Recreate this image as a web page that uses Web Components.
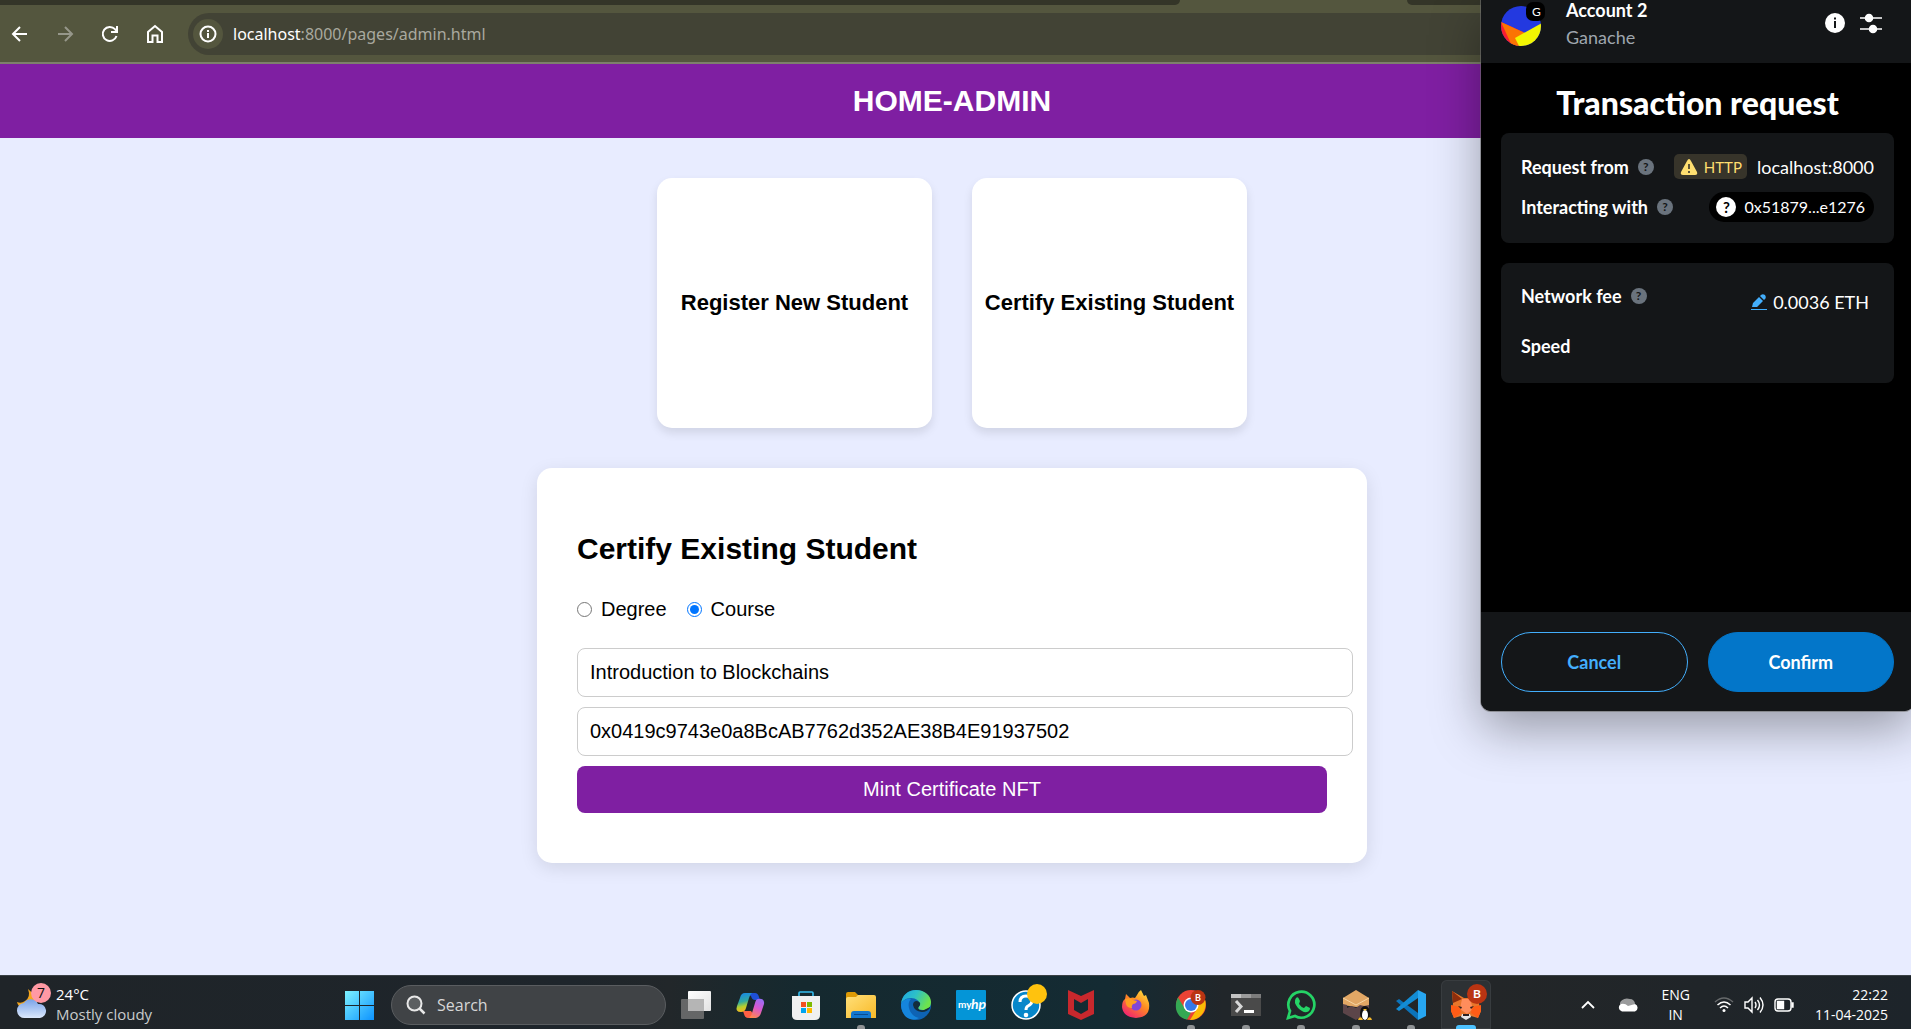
<!DOCTYPE html>
<html lang="en">
<head>
<meta charset="utf-8">
<title>Home-Admin</title>
<style>
html,body{margin:0;height:100%;overflow:hidden}
body{font-family:"Liberation Sans",Arial,sans-serif;background:#e8ecff}
</style>
</head>
<body>
<desktop-screen></desktop-screen>
<script>
function define(name, html){
  const t=document.createElement('template');
  t.innerHTML=html;
  customElements.define(name,class extends HTMLElement{
    constructor(){super();this.attachShadow({mode:'open'}).append(t.content.cloneNode(true));}
  });
}

define('browser-toolbar',`
<style>
:host{display:block;background:#54563e;border-bottom:2px solid #7e7f6c;font-family:"Noto Sans","Open Sans",sans-serif}
.tabs{display:flex;justify-content:space-between;height:5px}
.tabs span{background:#343528}
.a{width:1180px;border-radius:0 0 14px 0}.b{width:504px;border-radius:0 0 0 14px}
.bar{display:flex;align-items:center;padding:8px 8px 7px 8px;height:42px}
button{width:24px;height:24px;padding:0;border:0;background:none;margin-right:21px;flex:none}
button svg{display:block}
.omni{flex:1;display:flex;align-items:center;height:42px;border-radius:21px;background:#424335;padding-left:5px;gap:10px}
.info{width:30px;height:30px;border-radius:15px;background:#54563e;display:grid;place-items:center}
.url{font-size:16px;line-height:24px;color:#a9a99f}
.url b{font-weight:400;color:#fff}
</style>
<div class="tabs"><span class="a"></span><span class="b"></span></div>
<div class="bar">
<button aria-label="Back"><svg width="24" height="24" viewBox="0 0 24 24" fill="none" stroke="#fff" stroke-width="2"><path d="M19 12H5M12 5l-7 7 7 7"/></svg></button>
<button aria-label="Forward"><svg width="24" height="24" viewBox="0 0 24 24" fill="none" stroke="#96978a" stroke-width="2"><path d="M5 12h14M12 5l7 7-7 7"/></svg></button>
<button aria-label="Reload"><svg width="24" height="24" viewBox="0 0 24 24" fill="none" stroke="#fff" stroke-width="2"><path d="M18.5 14A7 7 0 1 1 17 7.200l2 2"/><path d="M19 4v6h-6"/></svg></button>
<button aria-label="Home"><svg width="24" height="24" viewBox="0 0 24 24" fill="none" stroke="#fff" stroke-width="2"><path d="M5 20V10l7-6 7 6v10h-4.500v-6.500h-5V20z"/></svg></button>
<div class="omni"><span class="info"><svg width="18" height="18" viewBox="0 0 18 18" fill="none" stroke="#fff" stroke-width="2"><circle cx="9" cy="9" r="7.500"/><path d="M9 8v5M9 5v2"/></svg></span><span class="url"><b>localhost</b>:8000/pages/admin.html</span></div>
</div>`);

define('option-card',`
<style>
:host{display:block}
button{display:flex;align-items:center;justify-content:center;width:275px;height:250px;padding:0;border:0;border-radius:15px;background:#fff;box-shadow:0 5px 10px rgba(0,0,0,.1);font:bold 22px/26px "Liberation Sans",Arial,sans-serif;color:#000;white-space:nowrap}
</style><button><slot></slot></button>`);

define('certify-form',`
<style>
:host{display:block;width:750px;padding:40px;background:#fff;border-radius:15px;box-shadow:0 5px 18px rgba(0,0,0,.1)}
h2{margin:24px 0 31px;font-size:30px;line-height:34px}
.kinds{display:flex;gap:20px;margin-bottom:27px}
label.k{display:flex;align-items:center;gap:9px;font-size:20px;line-height:24px}
input[type=radio]{width:15px;height:15px;margin:0}
input[type=text]{display:block;width:776px;box-sizing:border-box;height:49px;margin:0 0 10px;padding:0 12px;border:1px solid #ccc;border-radius:8px;font:20px "Liberation Sans",Arial,sans-serif;color:#000;background:#fff}
button{display:block;width:100%;height:47px;margin:0 0 10px;border:0;border-radius:8px;background:#7f1fa2;color:#fff;font:20px "Liberation Sans",Arial,sans-serif}
</style>
<h2>Certify Existing Student</h2>
<div class="kinds"><label class="k"><input type="radio" name="kind">Degree</label><label class="k"><input type="radio" name="kind" checked>Course</label></div>
<input type="text" aria-label="Course name" value="Introduction to Blockchains">
<input type="text" aria-label="Student address" value="0x0419c9743e0a8BcAB7762d352AE38B4E91937502">
<button>Mint Certificate NFT</button>`);

define('admin-page',`
<style>
:host{display:block;flex:1;min-height:0;overflow:hidden;background:#e8ecff;color:#000}
header{height:74px;display:flex;align-items:center;justify-content:center;background:#7f1fa2;color:#fff;padding-right:7px}
h1{margin:0;font-size:30px;line-height:34px}
main{display:flex;flex-direction:column;align-items:center;gap:40px;padding:40px 7px 40px 0}
.cards{display:flex;gap:40px}
</style>
<header><h1>HOME-ADMIN</h1></header>
<main><div class="cards"><option-card>Register New Student</option-card><option-card>Certify Existing Student</option-card></div>
<certify-form></certify-form></main>`);

define('help-dot',`
<style>:host{display:inline-grid;place-items:center;width:16px;height:16px;border-radius:50%;background:#6a737d;color:#141618;font:bold 12px/16px Lato,sans-serif}</style>?`);

define('wallet-popup',`
<style>
:host{display:flex;flex-direction:column;box-sizing:border-box;background:#000;color:#fff;border-radius:0 0 10px 10px;overflow:hidden;font:18px/24px Lato,"Open Sans",sans-serif;box-shadow:0 0 0 1px rgba(110,110,110,.6),0 18px 50px rgba(0,0,0,.35)}
header{display:flex;height:63px;background:#141618;box-sizing:border-box;padding:0 32px 0 20px}
.av{width:44px;height:46px;flex:none}
.who{margin-left:21px;flex:1;display:flex;flex-direction:column;gap:5px}
.who b{font-weight:700;line-height:20px}.who span{color:#9fa6ae}
.ic{display:flex;gap:14px;padding-top:12px}
.ic button{border:0;background:none;padding:0;width:22px;height:22px}
.ic svg{display:block}
h2{margin:22px 0 12px;text-align:center;font-size:32px;line-height:36px;font-weight:900}
section{background:#141618;border-radius:8px;margin:0 20px 20px;padding:21px 20px;display:flex;flex-direction:column}
.row{display:flex;align-items:center;justify-content:space-between}
.l{display:flex;align-items:center;gap:9px;font-weight:700}
.r{display:flex;align-items:center;gap:10px}
.http{display:flex;align-items:center;gap:6px;height:25px;padding:0 5px 0 6px;border-radius:5px;background:#37342a;color:#ffdf70;font-size:15px}
.addr{display:flex;align-items:center;gap:8px;height:30px;border-radius:15px;background:#000;padding:0 9px 0 7px;font-size:16px}
.q{width:20px;height:20px;border-radius:10px;background:#fff;color:#000;display:grid;place-items:center;font-weight:700;font-size:15px;line-height:20px}
.s1{gap:13px;height:110px;box-sizing:border-box}
.s2{gap:20px;height:120px;box-sizing:border-box}
.s2 .row{align-items:flex-start}
.fee{padding:6px 5px 0 0;gap:6px}
footer{margin-top:auto;background:#141618;height:99px;box-sizing:border-box;padding:20px 20px 19px;display:grid;grid-template-columns:1fr 1fr;gap:20px}
footer button{border-radius:30px;font:700 18px/24px Lato,sans-serif;border:1px solid #43aefc;background:none;color:#43aefc}
footer .ok{background:#0376c9;color:#fff;border-color:#0376c9}
</style>
<header>
<svg class="av" viewBox="0 0 44 46"><defs><clipPath id="c"><circle cx="20" cy="26" r="20"/></clipPath></defs><g clip-path="url(#c)"><path fill="#2339e0" d="M0 0h44v46H0z"/><path fill="#fa1d30" d="M0 22l22 10-6 14H0z"/><path fill="#fb7403" d="M0 22l24 11-6 13h-7z"/><path fill="#f2f602" d="M14 38l26-14.500V46H18z"/></g><rect x="25" y="2" width="19" height="19" rx="7"/><text x="35.500" y="16" text-anchor="middle" fill="#fff" font-size="12" font-family="Lato">G</text></svg>
<div class="who"><b>Account 2</b><span>Ganache</span></div>
<div class="ic"><button aria-label="Details"><svg width="22" height="22" viewBox="0 0 22 22"><circle cx="11" cy="11" r="10" fill="#fff"/><path d="M11 9v7M11 5.500v2" stroke="#141618" stroke-width="2"/></svg></button>
<button aria-label="Settings"><svg width="22" height="22" viewBox="0 0 22 22" fill="#fff" stroke="#fff" stroke-width="1.500"><path d="M0 6h22M0 17h22"/><circle cx="9" cy="6" r="3.500"/><circle cx="13" cy="17" r="3.500"/></svg></button></div>
</header>
<h2>Transaction request</h2>
<section class="s1">
<div class="row"><span class="l">Request from <help-dot></help-dot></span><span class="r"><span class="http"><svg width="18" height="18" viewBox="0 0 18 18"><path fill="#ffdf70" d="M9 1q1 0 2 2l6 11q1 3-2 3H3q-3 0-2-3L7 3q1-2 2-2z"/><path d="M9 6v5M9 13v2" stroke="#37342a" stroke-width="1.600"/></svg>HTTP</span>localhost:8000</span></div>
<div class="row"><span class="l">Interacting with <help-dot></help-dot></span><span class="addr"><span class="q">?</span>0x51879...e1276</span></div>
</section>
<section class="s2">
<div class="row"><span class="l">Network fee <help-dot></help-dot></span><span class="r fee"><svg width="16" height="16" viewBox="0 0 16 16" fill="#43aefc"><path d="M0 15h16v1H0zM1 13l1-4 6-6 4 4-6 6zM9 2q2-3 5-1 2 3-1 5z"/></svg>0.0036 ETH</span></div>
<div class="row"><span class="l">Speed</span></div>
</section>
<footer><button>Cancel</button><button class="ok">Confirm</button></footer>`);

const icons={
task:`<defs><linearGradient id="a" x2="1" y2="1"><stop stop-color="#fff"/><stop offset="1" stop-color="#e2e2e2"/></linearGradient></defs><rect x="7" y="1" width="23" height="20" rx="1" fill="url(#a)"/><rect y="9" width="23" height="20" rx="1" fill="#777" fill-opacity=".8"/><path fill="#b5b5b5" d="M7 9h16v12H7z"/>`,
copilot:`<defs><linearGradient id="a" x1=".3" x2=".5" y2="1"><stop stop-color="#1788e8"/><stop offset=".45" stop-color="#31a9a0"/><stop offset=".7" stop-color="#b5cf2e"/><stop offset="1" stop-color="#ffb21f"/></linearGradient><linearGradient id="b" x1=".7" x2=".3" y2="1"><stop stop-color="#9a6cf5"/><stop offset=".45" stop-color="#d857d0"/><stop offset="1" stop-color="#ff874d"/></linearGradient></defs><path fill="#1e4fd6" d="M9 3h10q3 0 4 4l1 3h-5q-3 0-4-4z"/><path fill="#ff6044" d="M7 21h8l2 3q-1 4-5 4-3 0-4-4z"/><path fill="url(#a)" d="M9 3h7q-2 1-3 5l-3 10q-1 4-5 4-6 0-4-6L4 8q1-5 5-5z"/><path fill="url(#b)" d="M22 9q7-1 6 5l-3 9q-1 4-5 5h-8q3-1 4-5l3-10q1-4 3-4z"/>`,
store:`<path d="M8 7V3q0-1 1-1h12q1 0 1 1v4" fill="none" stroke="#35bdf0" stroke-width="1.600"/><path fill="#f0f0f0" d="M1 6h28v19q0 5-5 5H6q-5 0-5-5z"/><path fill="#f25022" d="M10 12h5v5h-5z"/><path fill="#7fba00" d="M16 12h5v5h-5z"/><path fill="#00a4ef" d="M10 18h5v5h-5z"/><path fill="#ffb900" d="M16 18h5v5h-5z"/>`,
files:`<defs><linearGradient id="a" x2="1" y2="1"><stop stop-color="#ffe07a"/><stop offset="1" stop-color="#f9b927"/></linearGradient></defs><path fill="#dd9a05" d="M0 4q0-2 2-2h7l4 4v5H0z"/><path fill="url(#a)" d="M0 9q0-2 2-2h8l2-2h16q2 0 2 2v21H0z"/><path fill="#1477cf" d="M5 28v-4q0-3 3-3h14q3 0 3 3v4z"/><path fill="#0b4c91" d="M8 24h14v1H8z"/>`,
edge:`<defs><linearGradient id="a" x2="1" y2=".4"><stop stop-color="#1ca4e4"/><stop offset=".5" stop-color="#2dc0c8"/><stop offset="1" stop-color="#6de34c"/></linearGradient></defs><circle cx="15" cy="15" r="15" fill="#0e63b4"/><path fill="url(#a)" d="M0 14C1 5 7 0 15 0c9 0 15 6 15 12 0 6-4 8-8 8-3 0-5-1-5-2l2-3c0-4-4-7-9-7-5 0-9 3-10 6z"/><path fill="#1585dc" d="M0 14c2-4 6-6 10-5-2 2-3 5-2 9 1 5 5 9 10 10-10 5-18-3-18-14z"/><path fill="#142d3c" d="M12 15q0-4 4-4 4 1 3 4l-2 3q1 3 6 2l6-3v1q-3 4-8 4-8-1-9-7z"/>`,
myhp:`<rect width="30" height="30" rx="1" fill="#0495d7"/><text x="2" y="18" font-family="Lato" font-size="10" font-weight="700" fill="#fff">my</text><text x="15" y="19" font-family="Lato" font-size="14" font-style="italic" font-weight="700" fill="#fff">hp</text>`,
help:`<circle cx="15" cy="15" r="14" fill="#0787ca" stroke="#fff" stroke-width="1.500"/><path d="M9 12q0-6 6-6t6 5q0 3-4 5-2 1-2 4" fill="none" stroke="#fff" stroke-width="3"/><circle cx="15" cy="25" r="2.300" fill="#fff"/><circle cx="26" cy="4" r="10" fill="#ffc20e"/>`,
mcafee:`<path fill="#c8282d" fill-rule="evenodd" d="M2 0l13 6 13-6v24l-13 6-13-6zM8 9v11l7 4 7-4V9l-7 4z"/>`,
firefox:`<defs><linearGradient id="a" x1="1" x2=".3" y2="1"><stop stop-color="#fff044"/><stop offset=".5" stop-color="#ff8a22"/><stop offset="1" stop-color="#f0256f"/></linearGradient></defs><path fill="url(#a)" d="M1 17q0-6 3-8l1-5 4 4q3-1 5 0l2-3q1-3 4-5l3 6 2-1 3 8q2 14-13 15Q2 27 1 17z"/><circle cx="15" cy="15" r="5.500" fill="#8246d8"/><path fill="#ff9e21" d="M4 9q5-2 8 1l4 1q-1 3-4 3-2 2-1 4-5 0-6-4z"/>`,
chrome:`<circle cx="15" cy="15" r="15" fill="#ea4335"/><path fill="#34a853" d="M2 7.500l8 13 5 2-4 7C1 28-3 17 2 7.500z"/><path fill="#fbbc05" d="M15 8h13.500c4 10-3 22-14.500 22l7.500-12z"/><circle cx="15" cy="15" r="7.500" fill="#fff"/><circle cx="15" cy="15" r="6" fill="#3579e9"/><circle cx="22" cy="7.500" r="7.500" fill="#ba3412"/><text x="22" y="11" text-anchor="middle" font-family="Lato" font-size="9" font-weight="700" fill="#fff">B</text>`,
term:`<path fill="#4a4a4a" d="M0 4h30v22H0z"/><path fill="#c4c4c4" d="M0 4h10v4H0z"/><path fill="#9b9b9b" d="M10 4h10v4H10z"/><path fill="#7c7c7c" d="M20 4h10v4H20z"/><path d="M5 11l5 5.500-5 5.500" fill="none" stroke="#d8d8d8" stroke-width="3"/><path fill="#fff" d="M13 20h10v3H13z"/>`,
whatsapp:`<path d="M2 28l2-7a13 13 0 1 1 5 5z" fill="none" stroke="#25d366" stroke-width="2.700"/><path fill="#25d366" d="M10 8q2-2 3 1l1 2-1 3q2 3 5 4l2-2 4 2q0 3-3 4-4 1-9-4-5-6-2-10z"/>`,
wsl:`<path fill="#e2a765" d="M15 0l13 8v8l-13 1-13-2V8z"/><path d="M2 8l13 7 13-7" stroke="#f7d5a3" fill="none"/><path fill="#5c4549" d="M2 14l4 1v3l4-2 5 2 4-3 4 1 5-1v7l-13 8-13-7z"/><ellipse cx="24" cy="23" rx="5" ry="7" fill="#111"/><ellipse cx="24" cy="25" rx="3" ry="5" fill="#fff"/><path fill="#f6b92c" d="M17 30q1-4 4-2l1 2zM31 30q-1-4-4-2l-1 2zM22 19h4l-2 2z"/>`,
vscode:`<path fill="#0b73ba" d="M0 11l3-2 19 14v7z"/><path fill="#138cd4" d="M0 19l3 2L22 8V0z"/><path fill="#27a6f1" d="M22 0l8 4v22l-8 4z"/>`,
fox:`<path fill="#e8762b" d="M1 1l12 7h5l11-7-1 13 2 7-3 7-7-2-5 3-5-3-7 2-3-7 2-7z"/><path fill="#8d2d0c" d="M1 1l10 8-9 4z"/><path fill="#ff8d5c" d="M11 9h8l3 10-6 5-7-5z"/><path fill="#ff5c16" d="M0 15l9 2 1 6-7 5-3-7zM30 15l-9 2-1 6 7 5 3-7z"/><path fill="#e5e5e5" d="M11 24h8l1 3-5 3-5-3z"/><path fill="#2c2020" d="M7 16l4 1-1 2zM23 16l-4 1 1 2zM12 24h6v2h-6z"/><circle cx="26" cy="4" r="10" fill="#ba3412"/><text x="26" y="8" text-anchor="middle" font-family="Lato" font-size="12" font-weight="700" fill="#fff">B</text>`};

customElements.define('app-icon',class extends HTMLElement{
  constructor(){super();this.attachShadow({mode:'open'});}
  connectedCallback(){
    const run=this.getAttribute('run');
    this.shadowRoot.innerHTML=`<style>
:host{display:block;flex:none;width:55px;height:54px}
button{display:flex;flex-direction:column;justify-content:space-between;align-items:center;width:55px;height:54px;box-sizing:border-box;padding:15px 0 0;border:0;background:none}
button.active{width:50px;margin:5px 3px 0;height:49px;padding-top:10px;background:#2d3134;border-radius:6px 6px 0 0;box-shadow:inset 0 0 0 1px #383c3f}
svg{display:block;overflow:visible}
i{display:block;width:8px;height:4px;border-radius:3px 3px 0 0;background:#8f9294}
.active i{width:20px;background:#4cc2ff}
</style><button class="${run||''}" aria-label="${this.getAttribute('label')}"><svg width="30" height="30" viewBox="0 0 30 30">${icons[this.getAttribute('icon')]}</svg>${run?'<i></i>':''}</button>`;
  }
});

define('task-bar',`
<style>
:host{display:grid;grid-template-columns:332px auto 1fr;height:54px;flex:none;background:linear-gradient(90deg,#1f2428 0,#1e252b 30%,#22272a 35%,#15292f 42%,#142b33 58%,#21262a 64%,#232628 78%,#1d242a 100%);box-shadow:inset 0 1px #3a4145;font:14px/20px "Open Sans","Noto Sans",sans-serif;color:#fff}
.w{display:flex;padding:9px 0 0 16px;gap:6px;font-size:15px}
.w p{margin:0}.w p span{display:block}.w .s{color:#c9cbcc}
.w svg{margin-top:-2px;overflow:visible}
.mid{display:flex}
.start{width:55px;height:54px;padding:6px 0 0 13px;border:0;background:none}
.start svg,.tray svg{display:block}
.search{display:flex;align-items:center;gap:11px;width:275px;height:40px;box-sizing:border-box;margin:10px 2px 0 4px;padding:0 14px;border-radius:20px;border:1px solid #5a5d60;background:#404346}
.search input{width:180px;border:0;background:none;padding:0;outline:0;font:16px/24px "Open Sans",sans-serif;color:#d6d6d6}
.search input::placeholder{color:#d6d6d6;opacity:1}
.tray{display:flex;justify-content:flex-end;align-items:center;padding:5px 23px 0 0}
.lang{text-align:center;margin:0 24px 0 23px}
.clock{text-align:right;margin-left:21px}
.clock span,.lang span{display:block}
.tray .ch{margin-right:23px}
.sys{display:flex;gap:10px}
</style>
<div class="w"><svg width="34" height="40" viewBox="0 0 34 40"><defs><linearGradient id="cl" x2="0" y2="1"><stop stop-color="#7aa3e8"/><stop offset="1" stop-color="#dbe8fc"/></linearGradient></defs><path fill="#f4a51c" d="M12 7q3 8-3 12-4 3-8 1 1 5 6 6h10l6-9z"/><path fill="url(#cl)" d="M9 36a7 7 0 0 1-1-15 8 8 0 0 1 14 1 7 7 0 0 1 2 14z"/><circle cx="25" cy="11" r="10" fill="#ff99a4"/><text x="25" y="16" text-anchor="middle" font-size="14" fill="#111">7</text></svg><p><span>24°C</span><span class="s">Mostly cloudy</span></p></div>
<div class="mid">
<button class="start" aria-label="Start"><svg width="29" height="29" viewBox="0 0 29 29"><defs><linearGradient id="g" gradientUnits="userSpaceOnUse" x2="29" y2="29"><stop stop-color="#7df2ff"/><stop offset="1" stop-color="#0d93ff"/></linearGradient></defs><path fill="url(#g)" d="M0 0h14v14H0zM15 0h14v14H15zM0 15h14v14H0zM15 15h14v14H15z"/></svg></button>
<label class="search"><svg width="20" height="20" viewBox="0 0 20 20" fill="none" stroke="#e8e8e8" stroke-width="2"><circle cx="8.500" cy="8.500" r="7" fill="#5c5f61"/><path stroke-width="2.500" d="M13.500 13.500l5 5"/></svg><input type="text" aria-label="Search" placeholder="Search"></label>
<app-icon icon="task" label="Task view"></app-icon><app-icon icon="copilot" label="Copilot"></app-icon><app-icon icon="store" label="Store"></app-icon><app-icon icon="files" label="Files" run="on"></app-icon><app-icon icon="edge" label="Edge"></app-icon><app-icon icon="myhp" label="myHP"></app-icon><app-icon icon="help" label="Support"></app-icon><app-icon icon="mcafee" label="McAfee"></app-icon><app-icon icon="firefox" label="Firefox"></app-icon><app-icon icon="chrome" label="Chrome" run="on"></app-icon><app-icon icon="term" label="Terminal" run="on"></app-icon><app-icon icon="whatsapp" label="WhatsApp" run="on"></app-icon><app-icon icon="wsl" label="WSL" run="on"></app-icon><app-icon icon="vscode" label="Code" run="on"></app-icon><app-icon icon="fox" label="MetaMask" run="active"></app-icon>
</div>
<div class="tray">
<svg class="ch" width="14" height="10" viewBox="0 0 14 10" fill="none" stroke="#fff" stroke-width="1.800"><path d="M1 8l6-6 6 6"/></svg>
<svg width="20" height="14" viewBox="0 0 20 14"><path fill="#9a9b9c" d="M3 8a7 5 0 0 1 9-7 5 5 0 0 1 5 5l-5 3z"/><path fill="#fff" d="M4 13.500a4 4 0 0 1-1-7.500q4-1 7 2l7-2a4 4 0 0 1 0 7.500z"/></svg>
<div class="lang"><span>ENG</span><span>IN</span></div>
<div class="sys">
<svg width="20" height="20" viewBox="0 0 20 20" fill="none" stroke="#fff" stroke-width="1.500"><path stroke="#66696b" d="M1 7q9-8 18 0"/><path d="M3.500 10q6.500-6 13 0M6 13q4-4 8 0"/><circle cx="10" cy="15.500" r="1.500" fill="#fff" stroke="none"/></svg>
<svg width="20" height="20" viewBox="0 0 20 20" fill="none" stroke="#fff" stroke-width="1.400"><path d="M1 7h3l4-4v14l-4-4H1zM11 7q2 3 0 6M13.500 5q4 5 0 10M16 2.500q6 7.500 0 15"/></svg>
<svg width="20" height="20" viewBox="0 0 20 20" fill="none" stroke="#fff" stroke-width="1.400"><rect x="1" y="4" width="16" height="12" rx="3"/><path fill="#fff" d="M3.500 6.500h6v7h-6zM18 8h1v4h-1z"/></svg>
</div>
<div class="clock"><span>22:22</span><span>11-04-2025</span></div>
</div>`);

define('desktop-screen',`
<style>
:host{display:flex;flex-direction:column;height:100vh;position:relative;overflow:hidden}
wallet-popup{position:absolute;top:0;right:-3px;width:433px;height:711px}
</style>
<browser-toolbar></browser-toolbar>
<admin-page></admin-page>
<task-bar></task-bar>
<wallet-popup></wallet-popup>`);
</script>
</body>
</html>
